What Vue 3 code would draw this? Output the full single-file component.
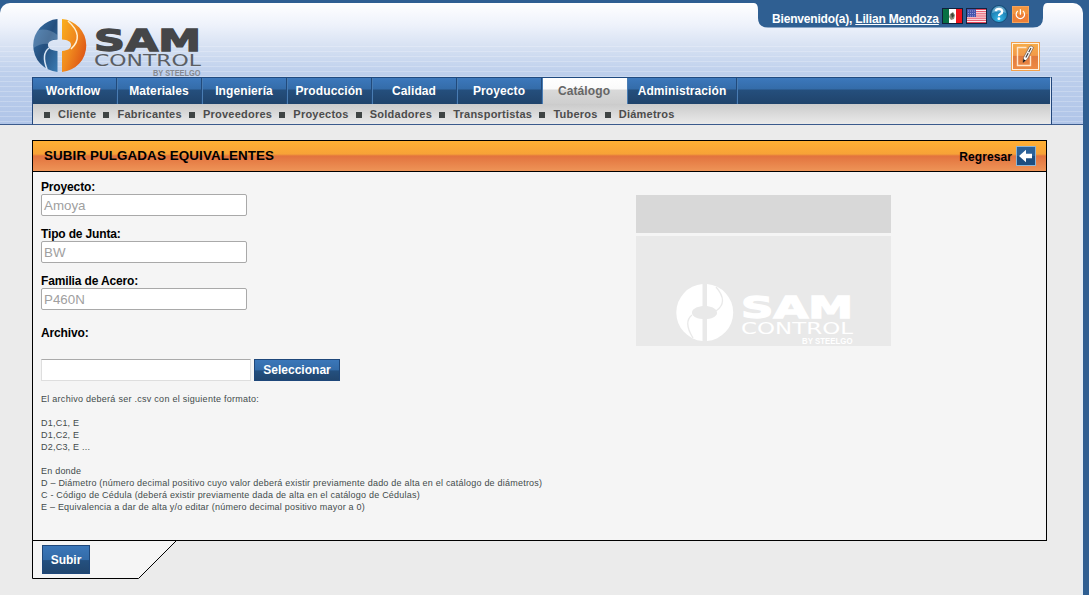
<script setup>
const tabs = ['Workflow', 'Materiales', 'Ingeniería', 'Producción', 'Calidad', 'Proyecto', 'Catálogo', 'Administración']
const active = 'Catálogo'
const links = ['Cliente', 'Fabricantes', 'Proveedores', 'Proyectos', 'Soldadores', 'Transportistas', 'Tuberos', 'Diámetros']
const fields = [
  { label: 'Proyecto:', value: 'Amoya' },
  { label: 'Tipo de Junta:', value: 'BW' },
  { label: 'Familia de Acero:', value: 'P460N' },
]
const help = [
  'El archivo deberá ser .csv con el siguiente formato:', '',
  'D1,C1, E', 'D1,C2, E', 'D2,C3, E ...', '', 'En donde',
  'D – Diámetro (número decimal positivo cuyo valor deberá existir previamente dado de alta en el catálogo de diámetros)',
  'C - Código de Cédula (deberá existir previamente dada de alta en el catálogo de Cédulas)',
  'E – Equivalencia a dar de alta y/o editar (número decimal positivo mayor a 0)',
]
const stripes = [0, 1, 2, 3, 4, 5, 6]
</script>

<template>
  <div class="page">
    <header class="header">
      <div class="userbar">
        <svg class="userbar-bg" width="293" height="28" viewBox="0 0 293 28">
          <path d="M0 0H293V3Q289 3 289 10V18Q289 27.500 279 27.500H14Q4 27.500 4 18V10Q4 3 0 3Z" fill="#2f5f92" />
        </svg>
        <span class="welcome">Bienvenido(a), <a>Lilian Mendoza</a></span>
        <svg class="flag" width="21" height="16" viewBox="0 0 21 16">
          <rect width="21" height="16" fill="#10203a" />
          <rect x="1" y="1" width="6" height="14" fill="#087044" />
          <rect x="7" y="1" width="7" height="14" fill="#fff" />
          <rect x="14" y="1" width="6" height="14" fill="#f0141c" />
          <path d="M8 6l3-2 2 3-1 4-3 1-2-3z" fill="#8c8a78" />
          <path d="M9 6l2-1 1 3-2 2z" fill="#3c4638" />
        </svg>
        <svg class="flag" width="21" height="16" viewBox="0 0 21 16">
          <rect width="21" height="16" fill="#16233f" />
          <rect x="1" y="1" width="19" height="14" fill="#fff" />
          <rect v-for="s in stripes" :key="s" x="1" :y="1 + s * 2.15" width="19" height="1.1" fill="#e4475c" />
          <rect x="1" y="1" width="9" height="8" fill="#4454ad" />
          <path d="M2 3h8M2 5.5h8M2 8h8" stroke="#a9b2e2" stroke-width=".8" stroke-dasharray="1 1" />
        </svg>
        <svg class="help-icon" width="18" height="18" viewBox="0 0 18 18">
          <defs>
            <radialGradient id="ball" cx=".5" cy=".8" r=".8">
              <stop offset="0" stop-color="#35b8e8" /><stop offset=".65" stop-color="#1e80b4" /><stop offset="1" stop-color="#155481" />
            </radialGradient>
          </defs>
          <circle cx="9" cy="9" r="8.5" fill="url(#ball)" stroke="#174e79" />
          <path d="M2 8a7 7 0 0 1 14 0Q9 5 2 8z" fill="#8fc9e6" opacity=".6" />
          <path d="M5.800 6.200Q6 3.800 9 3.800T12.200 6.400Q12.200 8 10.500 8.800T9 11.200" fill="none" stroke="#fff" stroke-width="2.300" />
          <circle cx="8.900" cy="13.700" r="1.400" fill="#fff" />
        </svg>
        <svg class="power-icon" width="17" height="17" viewBox="0 0 17 17">
          <rect x=".5" y=".5" width="16" height="16" fill="#ee7f36" stroke="#f5a35c" />
          <rect x="1" y="1" width="15" height="7" fill="#f29540" />
          <path d="M5.800 5A4.200 4.200 0 1 0 10.900 5M8.400 3.200V8.800" fill="none" stroke="#fff" stroke-width="1.200" />
        </svg>
      </div>

      <svg class="logo" width="176" height="59" viewBox="0 0 176 59">
        <defs>
          <linearGradient id="blueHalf" x1="0" y1="0" x2="1" y2="1">
            <stop offset="0" stop-color="#3974ac" /><stop offset=".5" stop-color="#244f7e" /><stop offset="1" stop-color="#3a7bb3" />
          </linearGradient>
          <linearGradient id="orangeHalf" x1="0" y1="0" x2="1" y2=".7">
            <stop offset="0" stop-color="#fab01e" /><stop offset=".5" stop-color="#f08a1e" /><stop offset="1" stop-color="#dc5216" />
          </linearGradient>
          <clipPath id="disc"><circle cx="27.500" cy="27.500" r="26.500" /></clipPath>
        </defs>
        <path d="M25.500 1A26.600 26.600 0 0 0 25.500 54V33C19 32.500 16 30.500 16 27C16 23.500 19 22 25.500 21.500Z" fill="url(#blueHalf)" />
        <path clip-path="url(#disc)" d="M0 14Q14 8 25.500 17V21C19 21.500 16 24 16 26Q9 25 0 31Z" fill="#a9c3de" opacity=".3" />
        <path d="M30 1A26.600 26.600 0 0 1 30 54V33C36 32.500 39 30.500 39 27S36 22 30 21.500Z" fill="url(#orangeHalf)" />
        <path d="M17 30Q9 36 15 51" fill="none" stroke="#d8e5f4" stroke-width="1.500" />
        <path d="M36 3Q53 18 39 31" fill="none" stroke="#fff0d2" stroke-width="1.500" />
        <text class="logo-sam" x="62" y="32.500" textLength="107" lengthAdjust="spacingAndGlyphs">SAM</text>
        <text class="logo-control" x="62" y="48" textLength="107" lengthAdjust="spacingAndGlyphs">CONTROL</text>
        <text class="logo-by" x="121" y="57.500" textLength="47.500" lengthAdjust="spacingAndGlyphs">BY STEELGO</text>
      </svg>

      <svg class="edit-icon" width="29" height="29" viewBox="0 0 29 29">
        <defs>
          <linearGradient id="edit" x2="0" y2="1">
            <stop offset="0" stop-color="#f6ad4b" /><stop offset=".46" stop-color="#f29a49" /><stop offset=".5" stop-color="#e07a3e" /><stop offset="1" stop-color="#f08d45" />
          </linearGradient>
        </defs>
        <rect x=".5" y=".5" width="28" height="28" fill="url(#edit)" stroke="#f2a04c" />
        <rect x="1.500" y="1.500" width="26" height="26" fill="none" stroke="#fff3e0" />
        <path d="M15.500 5.500H6.500V23.500H19.500V14" fill="none" stroke="#ffe6cb" stroke-width="1.400" />
        <path d="M12 20.500L12.600 15.500L18.500 4.500Q20 3 22.500 5.500L16.500 17Z" fill="#fff" stroke="#5a4a40" stroke-width=".6" />
        <path d="M14.800 15.500L20 6" stroke="#453f3f" stroke-width="1.200" stroke-dasharray="5 1" />
        <path d="M12 20.500l.4-3.400 2.300 1.500z" fill="#111" />
      </svg>

      <div class="menu">
        <nav class="tabs">
          <a v-for="t in tabs" :key="t" class="tab" :class="{ active: t === active, last: t === 'Administración' }">{{ t }}</a>
        </nav>
        <nav class="subnav">
          <a v-for="l in links" :key="l" class="sublink">{{ l }}</a>
        </nav>
      </div>
    </header>

    <main class="main">
      <section class="panel">
        <div class="panel-head">
          <h1>SUBIR PULGADAS EQUIVALENTES</h1>
          <a class="back">Regresar
            <svg width="20" height="20" viewBox="0 0 20 20">
              <rect x=".5" y=".5" width="19" height="19" fill="#2b6198" stroke="#8cb5d6" />
              <rect x="1" y="10" width="18" height="9" fill="#1d4e80" />
              <path d="M3 10L10 3.800V7.800H16V12.200H10V16.200Z" fill="#fff" />
            </svg>
          </a>
        </div>
        <div class="panel-body">
          <div class="form">
            <div v-for="f in fields" :key="f.label" class="field">
              <label>{{ f.label }}</label>
              <div class="input">{{ f.value }}</div>
            </div>
            <label class="file-label">Archivo:</label>
            <div class="file-row">
              <div class="file-input"></div>
              <button class="btn select">Seleccionar</button>
            </div>
            <div class="help">
              <p v-for="(h, i) in help" :key="i">{{ h }}</p>
            </div>
          </div>
          <aside class="side">
            <div class="side-top"></div>
            <div class="side-box">
              <svg width="255" height="110" viewBox="0 0 255 110">
                <path d="M66.500 48A28.600 28.600 0 0 0 66.500 105V83C59 82.500 56 79.500 56 77C56 73 60 71 66.500 70Z" fill="#fff" />
                <path d="M71 48A28.600 28.600 0 0 1 71 105V83C78 82.500 81 79.500 81 77C81 73 77 71 71 70Z" fill="#fff" />
                <path d="M56 79Q47 86 57 102M80 51Q93 66 80 75" fill="none" stroke="#e9e9e9" stroke-width="1.300" />
                <text class="logo-sam ghost" x="105" y="82" textLength="112" lengthAdjust="spacingAndGlyphs">SAM</text>
                <text class="logo-control ghost" x="105" y="97.500" textLength="112" lengthAdjust="spacingAndGlyphs">CONTROL</text>
                <text class="logo-by ghost" x="166" y="107.500" textLength="50.500" lengthAdjust="spacingAndGlyphs">BY STEELGO</text>
              </svg>
            </div>
          </aside>
        </div>
      </section>
      <div class="footer-tab">
        <svg class="footer-bg" width="146" height="39" viewBox="0 0 146 39">
          <path d="M.5 .5V38.500H106.500L144.500 .5Z" fill="#f5f5f5" stroke="#000" />
        </svg>
        <button class="btn submit">Subir</button>
      </div>
    </main>
  </div>
</template>

<style>
html, body { margin: 0; background: #2f5f92; overflow: hidden; }
</style>

<style scoped>
* { box-sizing: border-box; }
.page {
  width: 1083px; height: 595px; overflow: hidden;
  background: linear-gradient(to right, #ebebeb 1080px, #e2ebf3 1081px);
  font: bold 12px/14px "Liberation Sans", Arial, sans-serif; color: #000;
}
.header {
  position: relative; width: 1083px; height: 125px; border-top: 3px solid #2f5f92;
  border-bottom: 1px solid #3b5b8d; background: #2f5f92;
}
.header::before {
  content: ""; position: absolute; inset: 0; border-radius: 10px 10px 0 0;
  background: repeating-linear-gradient(to bottom, transparent 0 4px, rgba(255, 255, 255, .22) 4px 5px) 0 39px / 100% 100% no-repeat,
    linear-gradient(#fff 0, #eef2fb 22px, #d5e0f2 45px, #bdcfec 70px, #b0c5e8 121px);
}
.userbar { position: absolute; left: 754px; top: -3px; width: 293px; height: 28px; display: flex; align-items: flex-start; }
.userbar-bg { position: absolute; left: 0; top: 0; }
.userbar > :not(.userbar-bg) { position: relative; }
.welcome { margin: 12px 3px 0 18px; width: 167px; color: #fff; white-space: nowrap; letter-spacing: -.18px; }
.welcome a { text-decoration: underline; }
.flag { margin: 8px 3px 0 0; flex: none; }
.help-icon { margin: 5px 4px 0 0; flex: none; }
.power-icon { margin-top: 6px; flex: none; }
.logo { position: absolute; left: 32px; top: 15px; }
.logo-sam { font: bold 30px "DejaVu Sans", sans-serif; fill: #454648; stroke: #454648; stroke-width: 1.3; }
.logo-control { font: 15px "DejaVu Sans", sans-serif; fill: #5b5e63; }
.logo-by { font: bold 8.5px "Liberation Sans", sans-serif; fill: #85898f; }
.logo-sam.ghost { fill: #fff; stroke: #fff; }
.logo-control.ghost, .logo-by.ghost { fill: #fff; }
.edit-icon { position: absolute; left: 1011px; top: 39px; }
.menu {
  position: absolute; left: 32px; top: 74px; width: 1020px; height: 48px;
  border-right: 1px solid #23477b; border-left: 1px solid #23477b; border-bottom: 1px solid #3b5b8d;
}
.tabs {
  display: flex; height: 27px; border-top: 1px solid #1f4a80;
  background: linear-gradient(#3c78bc 0, #346ca9 11px, #254f7d 12px, #1f436b 26px); border-right: 1px solid #dce6f4;
}
.tab {
  width: 85px; padding-top: 6px; text-align: center; color: #fff; letter-spacing: .1px;
  border-right: 1px solid #4a7db3; box-shadow: inset -1px 0 #214a7b; padding-right: 2px; flex: none;
}
.tab:first-child { padding-right: 4px; }
.tab.active { background: linear-gradient(#fff 0, #fafafa 11px, #d9d9d9 12px, #cecece 26px); color: #666; box-shadow: none; }
.tab.last { width: 110px; padding-right: 1px; }
.subnav {
  display: flex; height: 20px; padding: 0 0 1px 11px; background: linear-gradient(#cbcbcb, #eaeaea);
  font-size: 11px; color: #4c4c4c; border-right: 1px solid #dce6f4; letter-spacing: .23px;
}
.sublink { display: flex; align-items: center; margin-right: 7.2px; }
.sublink::before { content: ""; width: 6px; height: 6px; margin: 2px 8px 0 0; background: #3f4444; }
.main { width: 1015px; margin: 15px 0 0 32px; }
.panel { height: 401px; border: 1px solid #000; background: #f5f5f5; }
.panel-head {
  display: flex; justify-content: space-between; height: 31px; border-bottom: 1px solid #000;
  padding: 0 10px 0 11px; background: linear-gradient(#ffb034 0, #f7a237 13px, #e2733e 15px, #ee9457 30px);
}
h1 { margin: 7px 0 0; font-size: 13.4px; line-height: 15px; letter-spacing: .1px; }
.back { display: flex; gap: 4px; padding-top: 5px; line-height: 22px; letter-spacing: .1px; }
.panel-body { display: flex; }
.form { width: 603px; padding: 8px 0 0 8px; }
.field { height: 47px; }
label { display: block; line-height: 14px; letter-spacing: -.15px; }
.input {
  width: 206px; height: 22px; border: 1px solid #a9a9a9; border-radius: 2px; background: #fff;
  color: #a0a0a0; font-size: 13.33px; font-weight: normal; line-height: 21px; padding-left: 2px;
}
.file-label { margin-top: 5px; }
.file-row { display: flex; gap: 3px; margin-top: 19px; }
.file-input { width: 210px; height: 22px; background: #fff; border: 1px solid #dedede; border-top-color: #aaa; }
.btn {
  border: 1px solid #1e477a; padding: 0; color: #fff; font: inherit;
  background: linear-gradient(#3b77b9 0, #336ba8 50%, #24507f 54%, #21466f);
}
.select { width: 86px; height: 22px; letter-spacing: .02px; }
.help { margin-top: 12px; font-size: 9px; line-height: 12px; font-weight: normal; color: #434b4b; letter-spacing: .218px; }
.help p { margin: 0; height: 12px; white-space: nowrap; }
.help p:first-child { letter-spacing: .27px; }
.side { width: 255px; padding-top: 23px; }
.side-top { height: 38px; background: #d8d8d8; margin-bottom: 3px; }
.side-box { height: 110px; background: #e9e9e9; }
.side-box svg { display: block; }
.footer-tab { position: relative; height: 38px; margin-top: -1px; padding: 5px 0 0 10px; }
.footer-bg { position: absolute; left: 0; top: 0; }
.submit { position: relative; width: 48px; height: 29px; }
</style>
